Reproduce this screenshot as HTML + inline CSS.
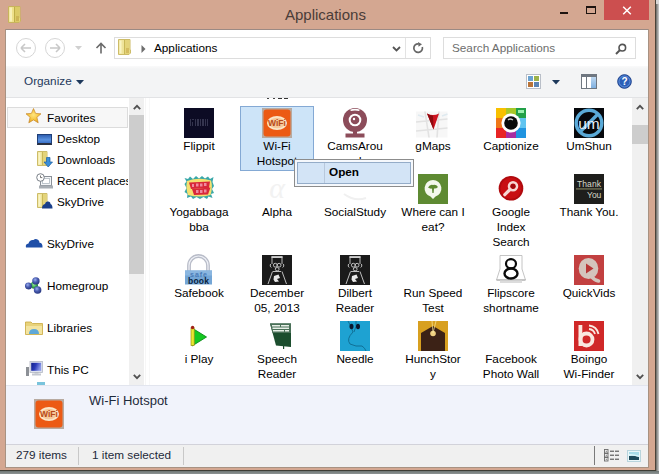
<!DOCTYPE html>
<html><head><meta charset="utf-8">
<style>
*{box-sizing:border-box;margin:0;padding:0}
html,body{width:659px;height:474px;overflow:hidden;background:#d8d8d8}
body{position:relative;font-family:"Liberation Sans",sans-serif;font-size:11.75px;color:#000}
.a{position:absolute}
#frame{left:0;top:0;width:656px;height:471px;background:#d4a791;border-right:1px solid #4a4238;border-bottom:1px solid #3e3e36}
#shadowR{left:656px;top:4px;width:3px;height:470px;background:linear-gradient(90deg,#6a6a66,#d0d0d0)}
#shadowB{left:0;top:471px;width:659px;height:3px;background:linear-gradient(180deg,#6e7674,#8e9494)}
#title{left:285px;top:6px;white-space:nowrap;font-size:15px;color:#4a3c38}
#close{left:604px;top:0;width:45px;height:20px;background:#cc4f4f}
#win{left:6px;top:29px;width:642px;height:438px;background:#fff;border-top:1px solid #9b8a84}
#cmd{left:6px;top:66px;width:642px;height:32px;background:linear-gradient(180deg,#fafafa 0,#f3f4f5 3px,#f3f4f5 100%);border-bottom:1px solid #e2e3e5}
.txt{white-space:nowrap;line-height:15px;margin-top:-1px}
#details{left:6px;top:385px;width:642px;height:59px;background:#f1f3fb;border-top:1px solid #e2e5ee}
#status{left:6px;top:444px;width:642px;height:23px;background:#f0f0f0;border-top:1px solid #d2d2da}
.sep{width:1px;background:#c8c8c8}
.sb{background:#f0f0f0}
.thumb{background:#cdcdcd}
.cell{position:absolute;width:74px;text-align:center}
.cell .ic{position:absolute;left:22px;top:2px;width:30px;height:30px}
.lb{width:74px;text-align:center;line-height:15px;color:#000;margin-top:-1px}
.nav{position:absolute;white-space:nowrap;line-height:15px;margin-top:-1px}
</style></head><body>
<div id="frame" class="a"></div>
<div id="shadowR" class="a"></div>
<div id="shadowB" class="a"></div>
<div id="title" class="a">Applications</div>
<div id="close" class="a"></div>
<div class="a" style="left:5px;top:29px;width:644px;height:439px;background:#a89282"></div>
<div id="win" class="a"></div>
<div id="cmd" class="a"></div>
<div id="details" class="a"></div>
<div id="status" class="a"></div>


<!-- grid start -->
<div class="a" style="left:240px;top:106px;width:74px;height:65px;background:#cde4f8;border:1px solid #84a9d4"></div>
<div class="a" style="left:267px;top:98px;width:2px;height:1px;background:#444"></div><div class="a" style="left:273px;top:98px;width:2px;height:1px;background:#444"></div><div class="a" style="left:278px;top:98px;width:4px;height:1px;background:#333"></div><div class="a" style="left:284px;top:98px;width:4px;height:1px;background:#333"></div>
<svg class="a" style="left:184px;top:108px" width="30" height="30" viewBox="0 0 30 30" overflow="visible"><rect x="0" y="0" width="30" height="30" fill="#0c0b24"/><g fill="#34344e"><rect x="6" y="11" width="1" height="7"/><rect x="8" y="11" width="2" height="1"/><rect x="8" y="14" width="1" height="4"/><rect x="11" y="11" width="1" height="7"/><rect x="13" y="11" width="2" height="7"/><rect x="16" y="11" width="1" height="7"/><rect x="18" y="11" width="2" height="7"/><rect x="21" y="11" width="1" height="7"/><rect x="23" y="11" width="1" height="7"/></g></svg>
<div class="lb a" style="left:162px;top:139px">Flippit</div>
<svg class="a" style="left:262px;top:108px" width="30" height="30" viewBox="0 0 30 30" overflow="visible"><rect x="0" y="0" width="30" height="30" fill="#b8aaa0"/><rect x="1.5" y="1.5" width="27" height="27" rx="3" fill="#ec5a14"/><ellipse cx="15" cy="15" rx="10" ry="7" fill="#fbe6c8"/><ellipse cx="15" cy="15" rx="8" ry="5.3" fill="#f6c89a"/><text x="15" y="18.3" text-anchor="middle" font-family="Liberation Sans" font-weight="bold" font-size="8.5" fill="#b84a18">WiFi</text></svg>
<div class="lb a" style="left:240px;top:139px">Wi-Fi<br>Hotspot</div>
<svg class="a" style="left:340px;top:108px" width="30" height="30" viewBox="0 0 30 30" overflow="visible"><circle cx="15" cy="12" r="12" fill="#8c4c5a"/><circle cx="15" cy="12" r="6.3" fill="#fff"/><circle cx="15" cy="12" r="4.3" fill="#8c4c5a"/><circle cx="14" cy="11" r="1.2" fill="#fff"/><path d="M10 1.8 Q15 -0.5 20 1.8 L19 3 Q15 1.8 11 3 Z" fill="#fff"/><rect x="13" y="23" width="4" height="3" fill="#8c4c5a"/><rect x="5.5" y="25.5" width="19" height="4" fill="#8c4c5a"/></svg>
<div class="lb a" style="left:318px;top:139px">CamsArou<br>nd</div>
<svg class="a" style="left:418px;top:108px" width="30" height="30" viewBox="0 0 30 30" overflow="visible"><rect x="-2" y="3.5" width="31.5" height="26" fill="#f7f7f7"/><path d="M-2 14 L29.5 11 M-2 23 L29.5 20 M7 3.5 L11 29.5 M21 3.5 L19 29.5" stroke="#e2e2e2" stroke-width="1.6"/><path d="M24 8 L29.5 6 M0 7 L6 9" stroke="#dfeaf0" stroke-width="1.6"/><path d="M9 5.5 Q15 8.5 21 5.5 L15.5 21.5 Z" fill="#cc1420"/><path d="M9 5.5 Q12 7.3 15 7.8 L15.5 21.5 Z" fill="#8e0a10"/></svg>
<div class="lb a" style="left:396px;top:139px">gMaps</div>
<svg class="a" style="left:496px;top:108px" width="30" height="30" viewBox="0 0 30 30" overflow="visible"><rect x="0" y="0" width="10" height="10" fill="#f8c000"/><rect x="10" y="0" width="10" height="10" fill="#a8c828"/><rect x="20" y="0" width="10" height="10" fill="#22a048"/><rect x="22" y="2" width="6" height="3" fill="#9af0b0"/><rect x="0" y="10" width="10" height="10" fill="#f07818"/><rect x="20" y="10" width="10" height="10" fill="#60c4f0"/><rect x="0" y="20" width="10" height="10" fill="#e82424"/><rect x="10" y="20" width="10" height="10" fill="#a82ca0"/><rect x="20" y="20" width="10" height="10" fill="#2094e0"/><rect x="10" y="10" width="10" height="10" fill="#f0f0f0"/><circle cx="15" cy="15" r="9.6" fill="#fff"/><circle cx="15" cy="15" r="6.8" fill="#0a0a0a"/><path d="M12 12 Q14 10 17 12" stroke="#ccc" stroke-width="1.3" fill="none"/></svg>
<div class="lb a" style="left:474px;top:139px">Captionize</div>
<svg class="a" style="left:574px;top:108px" width="30" height="30" viewBox="0 0 30 30" overflow="visible"><rect x="0" y="0" width="30" height="30" fill="#06080c"/><circle cx="15" cy="15" r="12.8" fill="none" stroke="#5aaad8" stroke-width="3.4"/><path d="M24 6 L6 24" stroke="#5aaad8" stroke-width="3.4"/><text x="15" y="20.5" text-anchor="middle" font-family="Liberation Sans" font-size="15.5" fill="#e8f0f8">um</text></svg>
<div class="lb a" style="left:552px;top:139px">UmShun</div>
<svg class="a" style="left:184px;top:174px" width="30" height="30" viewBox="0 0 30 30" overflow="visible"><path d="M0.5 4 L4 5 L6 2.5 L9 5 L12 2 L15 4.5 L18 2 L21 4.5 L24 2.5 L26 5 L29.5 3 L28.5 8 L30 12 L28 15 L30 19 L27 20 L28.5 24 L24.5 22.5 L23 25 L19.5 23 L16 25 L12.5 23 L9 25 L7 22.5 L3 24 L3.5 20 L0.5 18 L2.5 14 L0.5 10 L2.5 7.5 Z" fill="#3aa8a8"/><path d="M3 7 Q15 3 27 6.5 Q29 13 26.5 21 Q15 24 4 21 Q1.5 14 3 7 Z" fill="#f6e070"/><path d="M5 8.5 L26 7.5 L25 14 L7 15 Z" fill="#d8283a"/><path d="M8 15 L26.5 13.5 L24 20.5 L10 21 Z" fill="#d8283a"/><g fill="#f08aa0"><rect x="8" y="10" width="2" height="3"/><rect x="12" y="9.5" width="2.5" height="3"/><rect x="16" y="9.5" width="2.5" height="3"/><rect x="20" y="9" width="2.5" height="3"/><rect x="12" y="16" width="2.5" height="3"/><rect x="16" y="16" width="2.5" height="3"/><rect x="20" y="15.5" width="2.5" height="3"/></g></svg>
<div class="lb a" style="left:162px;top:205px">Yogabbaga<br>bba</div>
<svg class="a" style="left:262px;top:174px" width="30" height="30" viewBox="0 0 30 30" overflow="visible"><text x="15" y="24" text-anchor="middle" font-family="Liberation Serif" font-style="italic" font-size="30" fill="#f2f2f2">α</text></svg>
<div class="lb a" style="left:240px;top:205px">Alpha</div>
<svg class="a" style="left:340px;top:174px" width="30" height="30" viewBox="0 0 30 30" overflow="visible"><path d="M4 20 Q15 28 26 24" stroke="#f0f0f0" stroke-width="2" fill="none"/></svg>
<div class="lb a" style="left:318px;top:205px">SocialStudy</div>
<svg class="a" style="left:418px;top:174px" width="30" height="30" viewBox="0 0 30 30" overflow="visible"><rect x="0" y="0" width="30" height="30" fill="#5e8a32"/><path d="M15 6 A8.5 8.5 0 0 1 17.5 22.6 L15 25 L12.5 22.6 A8.5 8.5 0 0 1 15 6 Z" fill="#f4f8ee"/><path d="M10 13.5 Q12 10 15 11 Q18 10 20 13 Q18 15 16 14.5 L15.6 19 L14.4 19 L14 14.5 Q12 15 10 13.5 Z" fill="#5e8a32"/></svg>
<div class="lb a" style="left:396px;top:205px">Where can I<br>eat?</div>
<svg class="a" style="left:496px;top:174px" width="30" height="30" viewBox="0 0 30 30" overflow="visible"><circle cx="15" cy="14.3" r="12.3" fill="#b00a0e"/><circle cx="15" cy="14.3" r="10.5" fill="#c80e12"/><circle cx="17" cy="12.3" r="4" fill="none" stroke="#f6d8d4" stroke-width="2.6"/><circle cx="17" cy="12.3" r="2.4" fill="#a00a0e"/><path d="M14 15.5 L8.8 20.7" stroke="#f6d8d4" stroke-width="3.2" stroke-linecap="round"/></svg>
<div class="lb a" style="left:474px;top:205px">Google<br>Index<br>Search</div>
<svg class="a" style="left:574px;top:174px" width="30" height="30" viewBox="0 0 30 30" overflow="visible"><rect x="0" y="0" width="30" height="30" fill="#1e1e1c"/><text x="3" y="12.5" font-family="Liberation Sans" font-size="8.5" fill="#d8d8c8" textLength="24">Thank</text><rect x="2" y="14.5" width="26" height="0.9" fill="#9a9a70"/><text x="13" y="24" font-family="Liberation Sans" font-size="8.5" fill="#d8d8c8">You</text></svg>
<div class="lb a" style="left:552px;top:205px">Thank You.</div>
<svg class="a" style="left:184px;top:255px" width="30" height="30" viewBox="0 0 30 30" overflow="visible"><path d="M5 17 V10.5 A9.5 9.5 0 0 1 24 10.5 V17" stroke="#b8bcc8" stroke-width="3.8" fill="none"/><path d="M5 17 V10.5 A9.5 9.5 0 0 1 24 10.5 V17" stroke="#eef0f6" stroke-width="1.2" fill="none"/><rect x="1" y="15.5" width="27" height="14" fill="#74a6d6"/><rect x="1" y="15.5" width="27" height="5" fill="#8ab6e0"/><text x="14.5" y="21.5" text-anchor="middle" font-family="Liberation Sans" font-weight="bold" font-size="7" fill="#4a7cb8" textLength="17">safe</text><text x="14.5" y="28.5" text-anchor="middle" font-family="Liberation Sans" font-weight="bold" font-size="8.5" fill="#0a2440" textLength="21">book</text></svg>
<div class="lb a" style="left:162px;top:286px">Safebook</div>
<svg class="a" style="left:262px;top:255px" width="30" height="30" viewBox="0 0 30 30" overflow="visible"><rect x="0" y="0" width="30" height="30" fill="#1a1a1a"/><g stroke="#cfcfcf" stroke-width="0.9" fill="none"><path d="M9.5 1.5 H20.5 M10 1.5 V9 M20 1.5 V9"/><circle cx="13.3" cy="10.2" r="1.9"/><circle cx="17.1" cy="10.2" r="1.9"/><ellipse cx="15.2" cy="14.2" rx="1.9" ry="1.7"/><path d="M8.5 9 Q7.5 11.5 9.3 12.5 M21.5 9 Q22.5 11.5 20.7 12.5"/><path d="M10.5 16.5 L6 29 M20 16.5 L24.5 29 M11 16.5 H19"/></g><path d="M12 21 L16.5 19.5 L18 23 L15 24 L17 26.5 L13 27 L11.5 24.5 Z" fill="#e8e8e8"/><rect x="9.5" y="2" width="11" height="1" fill="#cfcfcf"/></svg>
<div class="lb a" style="left:240px;top:286px">December<br>05, 2013</div>
<svg class="a" style="left:340px;top:255px" width="30" height="30" viewBox="0 0 30 30" overflow="visible"><rect x="0" y="0" width="30" height="30" fill="#1a1a1a"/><g stroke="#cfcfcf" stroke-width="0.9" fill="none"><path d="M9.5 1.5 H20.5 M10 1.5 V9 M20 1.5 V9"/><circle cx="13.3" cy="10.2" r="1.9"/><circle cx="17.1" cy="10.2" r="1.9"/><ellipse cx="15.2" cy="14.2" rx="1.9" ry="1.7"/><path d="M8.5 9 Q7.5 11.5 9.3 12.5 M21.5 9 Q22.5 11.5 20.7 12.5"/><path d="M10.5 16.5 L6 29 M20 16.5 L24.5 29 M11 16.5 H19"/></g><path d="M12 21 L16.5 19.5 L18 23 L15 24 L17 26.5 L13 27 L11.5 24.5 Z" fill="#e8e8e8"/><rect x="9.5" y="2" width="11" height="1" fill="#cfcfcf"/></svg>
<div class="lb a" style="left:318px;top:286px">Dilbert<br>Reader</div>
<div class="lb a" style="left:396px;top:286px">Run Speed<br>Test</div>
<svg class="a" style="left:496px;top:255px" width="30" height="30" viewBox="0 0 30 30" overflow="visible"><path d="M4 0.5 H26 V14 L29.5 25 H0.5 L4 14 Z" fill="#fff" stroke="#bdbdbd" stroke-width="0.9"/><path d="M0.5 25 H29.5" stroke="#9a9a9a" stroke-width="0.8"/><rect x="4" y="25.5" width="22" height="2.5" fill="#dcdcdc"/><ellipse cx="15" cy="8.8" rx="5" ry="4.6" fill="none" stroke="#0a0a0a" stroke-width="2.2"/><ellipse cx="15" cy="18.5" rx="6.5" ry="5" fill="none" stroke="#0a0a0a" stroke-width="2.4"/></svg>
<div class="lb a" style="left:474px;top:286px">Flipscore<br>shortname</div>
<svg class="a" style="left:574px;top:255px" width="30" height="30" viewBox="0 0 30 30" overflow="visible"><rect x="0" y="0" width="30" height="30" fill="#c24040"/><ellipse cx="14.5" cy="13.5" rx="9.8" ry="10.5" fill="#d4c4bc"/><path d="M17 21 Q20 25 24.5 26" stroke="#d4c4bc" stroke-width="3.6" stroke-linecap="round" fill="none"/><path d="M12 8.5 L19.5 13.5 L12 18.5 Z" fill="#b83636"/></svg>
<div class="lb a" style="left:552px;top:286px">QuickVids</div>
<svg class="a" style="left:184px;top:321px" width="30" height="30" viewBox="0 0 30 30" overflow="visible"><path d="M8 7 L22.5 16 L8 25 Z" fill="#14c820" stroke="#0a8a18" stroke-width="0.9" stroke-linejoin="round"/><rect x="7" y="7" width="3.2" height="17.5" fill="#e8e830" stroke="#a09018" stroke-width="0.7"/><circle cx="8.6" cy="6.5" r="1.7" fill="#a02018"/></svg>
<div class="lb a" style="left:162px;top:352px">i Play</div>
<svg class="a" style="left:262px;top:321px" width="30" height="30" viewBox="0 0 30 30" overflow="visible"><path d="M8 2.5 H29 V26 L14 24.5 Z" fill="#1c4e2e"/><path d="M8 2.5 H29 V12 L10.5 12 Z" fill="#4a7058"/><g fill="#e8f0e8"><rect x="10" y="4" width="8" height="1.5"/><rect x="19" y="4" width="8" height="1.5"/><rect x="10.5" y="6.5" width="16.5" height="1.5"/><rect x="11" y="9" width="11" height="1.5"/><rect x="23" y="9" width="4" height="1.5"/></g><rect x="21" y="24" width="1.2" height="4" fill="#1c4e2e"/></svg>
<div class="lb a" style="left:240px;top:352px">Speech<br>Reader</div>
<svg class="a" style="left:340px;top:321px" width="30" height="30" viewBox="0 0 30 30" overflow="visible"><rect x="0" y="0" width="30" height="30" fill="#1ea2d2"/><path d="M8 0 Q11 5 13 11 Q6 18 10 23 Q16 26 22 25 Q25 27 26 30" stroke="#0e6a90" stroke-width="0.9" fill="none"/><path d="M16 0 Q17 5 14 11" stroke="#0e6a90" stroke-width="0.9" fill="none"/><ellipse cx="11.5" cy="5.5" rx="2" ry="2.8" fill="#0a1830"/><ellipse cx="18" cy="5.5" rx="2" ry="2.8" fill="#0a1830"/></svg>
<div class="lb a" style="left:318px;top:352px">Needle</div>
<svg class="a" style="left:418px;top:321px" width="30" height="30" viewBox="0 0 30 30" overflow="visible"><rect x="0" y="0" width="30" height="30" fill="#d8a020"/><path d="M3 30 V12 L15 5 L27 12 V30 Z" fill="#3c2216"/><circle cx="15" cy="12.5" r="2.8" fill="#f0d080"/><path d="M14 0 L15 12 L18 0" stroke="#f8e8a0" stroke-width="1" fill="none" opacity="0.7"/></svg>
<div class="lb a" style="left:396px;top:352px">HunchStor<br>y</div>
<div class="lb a" style="left:474px;top:352px">Facebook<br>Photo Wall</div>
<svg class="a" style="left:574px;top:321px" width="30" height="30" viewBox="0 0 30 30" overflow="visible"><rect x="0" y="0" width="30" height="30" fill="#d02828"/><rect x="4.5" y="4" width="3.8" height="21" fill="#fae8e0"/><circle cx="12.5" cy="18.5" r="6" fill="none" stroke="#fae8e0" stroke-width="3.8"/><path d="M15 8 A7 7 0 0 1 21 13" stroke="#fae8e0" stroke-width="1.8" fill="none"/><path d="M15 4.5 A11 11 0 0 1 24.5 13" stroke="#fae8e0" stroke-width="1.8" fill="none"/></svg>
<div class="lb a" style="left:552px;top:352px">Boingo<br>Wi-Finder</div>
<!-- grid end -->
<!-- nav pane -->
<div class="a" style="left:7px;top:107px;width:121px;height:21px;border:1px solid #dcdcdc;background:#f7f7f7"></div>
<svg class="a" style="left:25px;top:108px" width="17" height="16" viewBox="0 0 17 16"><defs><radialGradient id="sg" cx="50%" cy="45%" r="60%"><stop offset="0" stop-color="#ffe680"/><stop offset="0.6" stop-color="#f5c23a"/><stop offset="1" stop-color="#d89420"/></radialGradient></defs><path d="M8.5 0.5 L10.6 5.4 L16 5.8 L11.9 9.3 L13.2 14.8 L8.5 11.9 L3.8 14.8 L5.1 9.3 L1 5.8 L6.4 5.4 Z" fill="url(#sg)" stroke="#c98a2a" stroke-width="0.7"/></svg>
<div class="nav" style="left:47px;top:111px">Favorites</div>
<div class="a" style="left:37px;top:134px;width:15px;height:11px;background:linear-gradient(180deg,#2f5fb0,#5a92e0 60%,#3a70c8);border:1px solid #1f3f78;border-bottom:2px solid #2a3040"></div>
<div class="nav" style="left:57px;top:132px">Desktop</div>
<svg class="a" style="left:37px;top:151px" width="16" height="17" viewBox="0 0 16 17"><path d="M0.5 0.5 H10 V14.5 H0.5 Z" fill="#efe49a" stroke="#cdbc68" stroke-width="1"/><rect x="1.5" y="1.5" width="2" height="12" fill="#faf4c4"/><rect x="5" y="1" width="1" height="13" fill="#c9b858"/><rect x="6" y="1" width="3.5" height="13" fill="#e4d47a"/><path d="M9.5 6.5 H13 V11 H15.5 L11.2 16 L7 11 H9.5 Z" fill="#3a8ed8" stroke="#1c5fa0" stroke-width="0.7"/></svg>
<div class="nav" style="left:57px;top:153px">Downloads</div>
<svg class="a" style="left:36px;top:173px" width="17" height="16" viewBox="0 0 17 16"><rect x="4.5" y="3.5" width="11" height="9" fill="#f4f6f8" stroke="#8a9098" stroke-width="1"/><rect x="6.5" y="5.5" width="7" height="5" fill="#fff" stroke="#b0b8c0" stroke-width="0.8"/><rect x="3" y="12.5" width="14" height="3" fill="#a8aeb4"/><circle cx="4.5" cy="4.5" r="3.8" fill="#fff" stroke="#7a8088" stroke-width="1"/><path d="M4.5 2.5 V4.6 H6.3" stroke="#555" stroke-width="0.8" fill="none"/></svg>
<div class="nav" style="left:57px;top:174px;width:71px;overflow:hidden">Recent places</div>
<svg class="a" style="left:37px;top:193px" width="16" height="16" viewBox="0 0 16 16"><path d="M0.5 0.5 H10 V14.5 H0.5 Z" fill="#efe49a" stroke="#cdbc68" stroke-width="1"/><rect x="1.5" y="1.5" width="2" height="12" fill="#faf4c4"/><rect x="5" y="1" width="1" height="13" fill="#c9b858"/><rect x="6" y="1" width="3.5" height="13" fill="#e4d47a"/><path d="M5 15.5 Q5 11.5 8 11 Q8.5 8 11 8.5 Q13.5 8.5 13.5 11 Q15.5 11.5 15.5 15.5 Z" fill="#1a3f8a"/></svg>
<div class="nav" style="left:57px;top:195px">SkyDrive</div>
<svg class="a" style="left:25px;top:238px" width="18" height="10" viewBox="0 0 18 10"><path d="M1 9.5 Q0 6 3.5 5.5 Q4.5 1.5 8.5 2 Q10.5 0 13 1.8 Q14.5 3 14.5 4.8 Q17.8 5 17.5 9.5 Z" fill="#1f4fa8"/></svg>
<div class="nav" style="left:47px;top:237px">SkyDrive</div>
<svg class="a" style="left:25px;top:277px" width="18" height="18" viewBox="0 0 18 18"><defs><radialGradient id="hb" cx="40%" cy="35%" r="65%"><stop offset="0" stop-color="#9ab0f0"/><stop offset="0.5" stop-color="#4a5cb0"/><stop offset="1" stop-color="#283880"/></radialGradient><radialGradient id="hg" cx="45%" cy="40%" r="60%"><stop offset="0" stop-color="#a0f0a0"/><stop offset="0.6" stop-color="#3aa850"/><stop offset="1" stop-color="#1a7030"/></radialGradient></defs><circle cx="9.3" cy="8.2" r="3.6" fill="url(#hg)"/><circle cx="10.9" cy="3.9" r="3.7" fill="url(#hb)"/><circle cx="3.4" cy="8.9" r="3.5" fill="url(#hb)"/><circle cx="12.6" cy="13" r="3.8" fill="url(#hb)"/></svg>
<div class="nav" style="left:47px;top:279px">Homegroup</div>
<svg class="a" style="left:25px;top:320px" width="18" height="15" viewBox="0 0 18 15"><path d="M0.5 2 H6 L7.5 3.5 H17.5 V14.5 H0.5 Z" fill="#e8d27a" stroke="#c9a840" stroke-width="0.8"/><path d="M1 6 H17 V14 H1 Z" fill="#f3e4a0"/><path d="M4 14 Q4 9 9 9 Q14 9 14 14 Z" fill="#5ea8d8"/></svg>
<div class="nav" style="left:47px;top:321px">Libraries</div>
<svg class="a" style="left:25px;top:361px" width="18" height="16" viewBox="0 0 18 16"><defs><linearGradient id="pcs" x1="0" y1="0" x2="1" y2="0.3"><stop offset="0" stop-color="#10208a"/><stop offset="0.5" stop-color="#2a3ab8"/><stop offset="1" stop-color="#8a98e8"/></linearGradient></defs><rect x="1" y="6" width="3" height="9" fill="#8c9096"/><rect x="5" y="0.5" width="12.5" height="11" fill="#dfe3ee" stroke="#b4b8c4" stroke-width="0.8"/><rect x="6.2" y="1.8" width="10" height="8" fill="url(#pcs)"/><rect x="9.5" y="11.5" width="4" height="1" fill="#b0b4bc"/><rect x="7" y="12.5" width="9" height="2" fill="#c4c8d0"/></svg>
<div class="nav" style="left:47px;top:363px">This PC</div>
<div class="a" style="left:37px;top:382px;width:8px;height:3px;background:#7ac4dc"></div>
<!-- nav scrollbar -->
<div class="a sb" style="left:129px;top:98px;width:15px;height:287px"></div><div class="a" style="left:145px;top:98px;width:1px;height:287px;background:#f6f6f6"></div><div class="a" style="left:149px;top:98px;width:1px;height:287px;background:#f8f8f8"></div>
<div class="a thumb" style="left:129px;top:115px;width:15px;height:159px"></div>
<svg class="a" style="left:133px;top:104px" width="8" height="6" viewBox="0 0 8 6"><path d="M0.8 5.2 L4 1.8 L7.2 5.2" stroke="#505050" stroke-width="1.8" fill="none"/></svg>
<svg class="a" style="left:133px;top:374px" width="8" height="6" viewBox="0 0 8 6"><path d="M0.8 0.8 L4 4.2 L7.2 0.8" stroke="#505050" stroke-width="1.8" fill="none"/></svg>
<!-- content scrollbar -->
<div class="a sb" style="left:632px;top:98px;width:16px;height:287px"></div>
<div class="a thumb" style="left:632px;top:125px;width:16px;height:19px"></div>
<svg class="a" style="left:636px;top:104px" width="8" height="6" viewBox="0 0 8 6"><path d="M0.8 5.2 L4 1.8 L7.2 5.2" stroke="#505050" stroke-width="1.8" fill="none"/></svg>
<svg class="a" style="left:636px;top:374px" width="8" height="6" viewBox="0 0 8 6"><path d="M0.8 0.8 L4 4.2 L7.2 0.8" stroke="#505050" stroke-width="1.8" fill="none"/></svg>


<!-- context menu -->
<div class="a" style="left:294px;top:159px;width:120px;height:28px;background:#f5f8fc;border:1px solid #8c8c8c"></div>
<div class="a" style="left:297px;top:162px;width:114px;height:22px;background:#d3e4f6;border:1px solid #94acc8"></div>
<div class="a" style="left:324px;top:163px;width:1px;height:20px;background:#b8c8dc"></div>
<div class="a txt" style="left:329px;top:165px;font-weight:bold;color:#000">Open</div>
<!-- details pane -->
<svg class="a" style="left:34px;top:399px" width="30" height="30" viewBox="0 0 30 30"><rect x="0" y="0" width="30" height="30" fill="#b8aaa0"/><rect x="1.5" y="1.5" width="27" height="27" rx="3" fill="#ec5a14"/><ellipse cx="15" cy="15" rx="10" ry="7" fill="#fbe6c8"/><ellipse cx="15" cy="15" rx="8" ry="5.3" fill="#f6c89a"/><text x="15" y="18.3" text-anchor="middle" font-family="Liberation Sans" font-weight="bold" font-size="8.5" fill="#b84a18">WiFi</text></svg>
<div class="a txt" style="margin-top:0;left:89px;top:393px;font-size:13px;line-height:16px;color:#1e2a3a">Wi-Fi Hotspot</div>
<!-- status bar -->
<div class="a txt" style="left:16px;top:448px;color:#1e2a3a">279 items</div>
<div class="a sep" style="left:78px;top:447px;height:18px"></div>
<div class="a txt" style="left:92px;top:448px;color:#1e2a3a">1 item selected</div>
<div class="a sep" style="left:183px;top:447px;height:18px"></div>
<div class="a sep" style="left:594px;top:446px;height:19px;background:#7a7a7a"></div>
<svg class="a" style="left:604px;top:449px" width="16" height="13" viewBox="0 0 16 13"><g fill="none" stroke="#6a6a6a" stroke-width="0.9"><rect x="0.5" y="0.5" width="3.5" height="3.5"/><rect x="0.5" y="4.5" width="3.5" height="3.5"/><rect x="0.5" y="8.5" width="3.5" height="3.5"/></g><g fill="#6a6a6a"><rect x="1.8" y="1.8" width="1" height="1"/><rect x="1.8" y="5.8" width="1" height="1"/><rect x="1.8" y="9.8" width="1" height="1"/><rect x="6" y="1.6" width="4" height="1.3"/><rect x="11" y="1.6" width="4" height="1.3"/><rect x="6" y="5.6" width="4" height="1.3"/><rect x="11" y="5.6" width="4" height="1.3"/><rect x="6" y="9.6" width="4" height="1.3"/><rect x="11" y="9.6" width="4" height="1.3"/></g></svg>
<svg class="a" style="left:627px;top:450px" width="14" height="12" viewBox="0 0 14 12"><rect x="0.5" y="0.5" width="13" height="11" fill="#eaf6f8" stroke="#b8d4dc" stroke-width="1"/><rect x="2" y="2" width="10" height="8" fill="#a8dce8"/><path d="M2 6 Q6 5 12 7 V10 H2 Z" fill="#1e4a5a"/><path d="M2 4 Q6 3.5 12 5.5 V7 Q6 5 2 6 Z" fill="#d8f4f8"/></svg>
<!-- title bar -->
<svg class="a" style="left:8px;top:6px" width="13" height="17" viewBox="0 0 13 17"><path d="M0.5 0.5 H12 V12 L12.5 12 V15 L11 16.5 H0.5 Z" fill="#eee08a" stroke="#c8b45c" stroke-width="1"/><rect x="1.5" y="1.5" width="2.5" height="14" fill="#f8f0b8"/><rect x="6" y="1" width="1" height="15" fill="#bfae48"/><rect x="7" y="1" width="4.5" height="15" fill="#dccb66"/><rect x="8" y="10" width="3" height="5" fill="#cdb555"/></svg>
<div class="a" style="left:560px;top:12px;width:8px;height:2px;background:#1e1410"></div>
<div class="a" style="left:586px;top:6px;width:10px;height:8px;border:1px solid #1e1410;border-top-width:2px"></div>
<svg class="a" style="left:622px;top:6px" width="10" height="9" viewBox="0 0 10 9"><path d="M1.2 0.8 L8.8 8.2 M8.8 0.8 L1.2 8.2" stroke="#fff" stroke-width="1.5"/></svg>
<!-- nav buttons -->
<svg class="a" style="left:15px;top:37px" width="22" height="22" viewBox="0 0 22 22"><circle cx="11" cy="11" r="9.5" fill="none" stroke="#d6d6d6" stroke-width="1"/><path d="M6 11 H16 M6 11 L10 7 M6 11 L10 15" stroke="#c8c8c8" stroke-width="1.6" fill="none"/></svg>
<svg class="a" style="left:44px;top:37px" width="22" height="22" viewBox="0 0 22 22"><circle cx="11" cy="11" r="9.5" fill="none" stroke="#d6d6d6" stroke-width="1"/><path d="M6 11 H16 M16 11 L12 7 M16 11 L12 15" stroke="#c8c8c8" stroke-width="1.6" fill="none"/></svg>
<svg class="a" style="left:75px;top:46px" width="8" height="5" viewBox="0 0 8 5"><path d="M0 0 H7 L3.5 4 Z" fill="#d0d0d0"/></svg>
<svg class="a" style="left:95px;top:42px" width="12" height="12" viewBox="0 0 12 12"><path d="M6 11.5 V1.5 M1.5 6 L6 1.5 L10.5 6" stroke="#6a6a6a" stroke-width="1.6" fill="none"/></svg>
<!-- address box -->
<div class="a" style="left:114px;top:37px;width:317px;height:22px;border:1px solid #dddddd;background:#fff"></div>
<div class="a" style="left:405px;top:38px;width:1px;height:20px;background:#e3e3e3"></div>
<svg class="a" style="left:118px;top:39px" width="13" height="16" viewBox="0 0 13 16"><path d="M0.5 0.5 H12 V11 L12.5 11 V14 L11 15.5 H0.5 Z" fill="#efe49a" stroke="#cdbc68" stroke-width="1"/><rect x="1.5" y="1.5" width="2" height="13" fill="#faf4c4"/><rect x="6" y="1" width="1" height="14" fill="#c9b858"/><rect x="7" y="1" width="4.5" height="14" fill="#e4d47a"/><rect x="8" y="9" width="3" height="5" fill="#d4bc60"/></svg>
<svg class="a" style="left:141px;top:45px" width="5" height="8" viewBox="0 0 5 8"><path d="M0.5 0 L4.5 4 L0.5 8 Z" fill="#6d6d6d"/></svg>
<div class="a txt" style="left:154px;top:41px;color:#000">Applications</div>
<svg class="a" style="left:392px;top:46px" width="9" height="6" viewBox="0 0 9 6"><path d="M1 1 L4.5 4.5 L8 1" stroke="#555" stroke-width="1.8" fill="none"/></svg>
<svg class="a" style="left:412px;top:42px" width="12" height="12" viewBox="0 0 12 12"><path d="M6.5 1.8 A4.3 4.3 0 1 0 10.3 5" stroke="#666" stroke-width="1.7" fill="none"/><path d="M6 0 L10 2.2 L6.5 4.8 Z" fill="#666"/></svg>
<!-- search box -->
<div class="a" style="left:443px;top:37px;width:193px;height:22px;border:1px solid #dddddd;background:#fff"></div>
<div class="a txt" style="left:452px;top:41px;color:#6d6d6d">Search Applications</div>
<svg class="a" style="left:615px;top:43px" width="12" height="12" viewBox="0 0 12 12"><circle cx="7.3" cy="4.7" r="3.3" fill="none" stroke="#555" stroke-width="1.6"/><path d="M5 7 L1 11" stroke="#555" stroke-width="2"/></svg>
<!-- command bar -->
<div class="a txt" style="left:24px;top:74px;color:#1e395b">Organize</div>
<svg class="a" style="left:76px;top:80px" width="9" height="5" viewBox="0 0 9 5"><path d="M0 0 H8 L4 4.5 Z" fill="#1e395b"/></svg>
<div class="a" style="left:526px;top:74px;width:15px;height:15px;border:1px solid #b9bfc8;background:#fff"></div>
<div class="a" style="left:528px;top:76px;width:5px;height:5px;background:#6aa2d0"></div>
<div class="a" style="left:534px;top:76px;width:5px;height:5px;background:#9cb24a"></div>
<div class="a" style="left:528px;top:82px;width:5px;height:5px;background:#b87338"></div>
<div class="a" style="left:534px;top:82px;width:5px;height:5px;background:#5a84b4"></div>
<svg class="a" style="left:552px;top:80px" width="8" height="5" viewBox="0 0 8 5"><path d="M0 0 H8 L4 4.5 Z" fill="#1e395b"/></svg>
<div class="a" style="left:581px;top:74px;width:16px;height:15px;border:1px solid #6f7780;background:#fff"></div>
<div class="a" style="left:586px;top:75px;width:1px;height:13px;background:#6f7780"></div>
<div class="a" style="left:591px;top:76px;width:5px;height:12px;background:linear-gradient(180deg,#c4dcf2,#7fb0e0)"></div>
<div class="a" style="left:581px;top:74px;width:16px;height:3px;background:#6f7780"></div>
<svg class="a" style="left:617px;top:74px" width="15" height="15" viewBox="0 0 15 15"><circle cx="7.5" cy="7.5" r="6.8" fill="#2b5fb8" stroke="#1b3f8a" stroke-width="1"/><circle cx="7.5" cy="7.5" r="5.5" fill="none" stroke="#6f9be0" stroke-width="0.8"/><text x="7.5" y="11.3" text-anchor="middle" font-family="Liberation Sans" font-weight="bold" font-size="10" fill="#fff">?</text></svg>

</body></html>
